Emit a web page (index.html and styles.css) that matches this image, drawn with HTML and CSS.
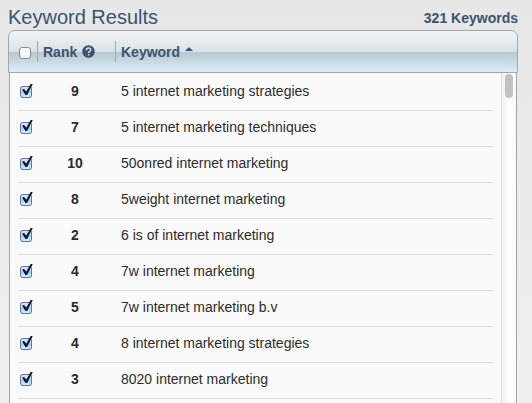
FILE: index.html
```html
<!DOCTYPE html>
<html lang="en">
<head>
<meta charset="utf-8">
<title>Keyword Results</title>
<link rel="stylesheet" href="styles.css">
</head>
<body>
<main class="page">
  <header class="heading">
    <h1 class="title">Keyword Results</h1>
    <p class="count">321 Keywords</p>
  </header>
  <section class="panel">
    <table class="results">
      <thead class="head">
        <tr class="head-row">
          <th class="head-check"><input class="box" type="checkbox" aria-label="Select all keywords"></th>
          <th class="head-cell">Rank
            <svg class="help" viewBox="0 0 13 13" aria-hidden="true"><circle cx="6.500" cy="6.500" r="6.300" fill="#3a546f"/><path d="M4.300 5.200C4.300 2.300 8.700 2.300 8.700 4.900C8.700 6.300 6.600 6.300 6.600 7.900" fill="none" stroke="#d5dfe5" stroke-width="1.500"/><rect x="5.800" y="9" width="1.600" height="1.500" fill="#d5dfe5"/></svg>
          </th>
          <th class="head-cell">Keyword
            <svg class="sort" viewBox="0 0 8 4" aria-hidden="true"><path d="M4 0L8 4H0Z" fill="#3a546f"/></svg>
          </th>
        </tr>
      </thead>
      <tbody class="rows">
        <tr class="row"><td class="check"><input class="box" type="checkbox" aria-label="5 internet marketing strategies" checked></td><td class="rank">9</td><td>5 internet marketing strategies</td></tr>
        <tr class="row"><td class="check"><input class="box" type="checkbox" aria-label="5 internet marketing techniques" checked></td><td class="rank">7</td><td>5 internet marketing techniques</td></tr>
        <tr class="row"><td class="check"><input class="box" type="checkbox" aria-label="50onred internet marketing" checked></td><td class="rank">10</td><td>50onred internet marketing</td></tr>
        <tr class="row"><td class="check"><input class="box" type="checkbox" aria-label="5weight internet marketing" checked></td><td class="rank">8</td><td>5weight internet marketing</td></tr>
        <tr class="row"><td class="check"><input class="box" type="checkbox" aria-label="6 is of internet marketing" checked></td><td class="rank">2</td><td>6 is of internet marketing</td></tr>
        <tr class="row"><td class="check"><input class="box" type="checkbox" aria-label="7w internet marketing" checked></td><td class="rank">4</td><td>7w internet marketing</td></tr>
        <tr class="row"><td class="check"><input class="box" type="checkbox" aria-label="7w internet marketing b.v" checked></td><td class="rank">5</td><td>7w internet marketing b.v</td></tr>
        <tr class="row"><td class="check"><input class="box" type="checkbox" aria-label="8 internet marketing strategies" checked></td><td class="rank">4</td><td>8 internet marketing strategies</td></tr>
        <tr class="row"><td class="check"><input class="box" type="checkbox" aria-label="8020 internet marketing" checked></td><td class="rank">3</td><td>8020 internet marketing</td></tr>
      </tbody>
    </table>
    <div class="track"><div class="thumb"></div></div>
  </section>
</main>
</body>
</html>
```
FILE: styles.css
```css
* {
  box-sizing: border-box;
}

body {
  margin: 0;
  background: linear-gradient(#e7e7e7, #f0f0f0);
  color: #2b2b2b;
  font: 14px/20px "Liberation Sans", Arial, sans-serif;
}

.page {
  display: flex;
  flex-direction: column;
  height: 100vh;
  padding: 4px 14px 0 8px;
  overflow: hidden;
}

.heading {
  display: flex;
  justify-content: space-between;
  align-items: flex-end;
  height: 26px;
  color: #3a546f;
}

.title {
  margin: 0;
  font-size: 20px;
  font-weight: 400;
  line-height: 26px;
}

.count {
  margin: 0;
  font-size: 14px;
  font-weight: 700;
  line-height: 24px;
}

.panel {
  position: relative;
  flex: 1;
  min-height: 0;
}

.results,
.rows {
  display: block;
}

.results {
  height: 100%;
}

.head {
  display: block;
  border: 1px solid #a3a7aa;
  border-radius: 7px 7px 0 0;
  background: linear-gradient(#f1f5f7, #dbe2e6 50%, #b4c6d0 50%, #deedf8);
}

.head-row {
  display: grid;
  grid-template-columns: 28px 78px 1fr;
  align-items: center;
  height: 41px;
}

.head-check,
.head-cell {
  padding: 0;
  text-align: left;
}

.head-check {
  display: flex;
  padding: 3px 0 0 10px;
}

.head-cell {
  display: flex;
  align-items: center;
  gap: 5px;
  height: 21px;
  padding-left: 5px;
  border-left: 1px solid #a3a9ae;
  color: #3a546f;
}

.help {
  width: 13px;
  height: 13px;
}

.sort {
  width: 8px;
  height: 4px;
  margin-bottom: 5px;
}

.rows {
  height: 100%;
  margin: 0 1px;
  padding: 2px 23px 0 8px;
  border: solid #a3a3a3;
  border-width: 0 1px;
  background: #fafafa;
}

.row {
  display: grid;
  grid-template-columns: 28px 58px 1fr;
  align-items: center;
  height: 36px;
  padding-bottom: 3px;
  border-bottom: 1px solid #dcdcdc;
}

.row td {
  padding: 0;
}

.row .check {
  display: flex;
  padding: 1px 0 0 2px;
}

.row .rank {
  text-align: center;
  font-weight: 700;
}

.row td:last-child {
  padding-left: 17px;
}

.box {
  position: relative;
  appearance: none;
  width: 12px;
  height: 12px;
  margin: 0;
  border: 1px solid #858c91;
  border-radius: 3px;
  background: linear-gradient(#fff, #f1f1f1);
}

.box:checked {
  border-color: #5b6fae #6577a0 #60748c;
  background: linear-gradient(#e0effc, #a3d0f7 55%, #cdf2ff);
}

/* The tick reaches past the top right corner of its box. */
.box:checked::before {
  content: "";
  position: absolute;
  top: -3px;
  left: 1px;
  width: 11px;
  height: 12px;
  background: #071426;
  clip-path: polygon(2% 52%, 18% 44%, 38% 68%, 82% 0, 100% 0, 46% 96%, 32% 96%);
}

.track {
  position: absolute;
  top: 43px;
  right: 2px;
  bottom: 0;
  width: 15px;
  padding: 1px 3px;
  border-left: 1px solid #dedede;
  background: linear-gradient(90deg, #f0f0f0, #fff 50%, #f9f9f9);
}

.thumb {
  width: 8px;
  height: 24px;
  border-radius: 4px;
  background: #c1c1c1;
}
```
